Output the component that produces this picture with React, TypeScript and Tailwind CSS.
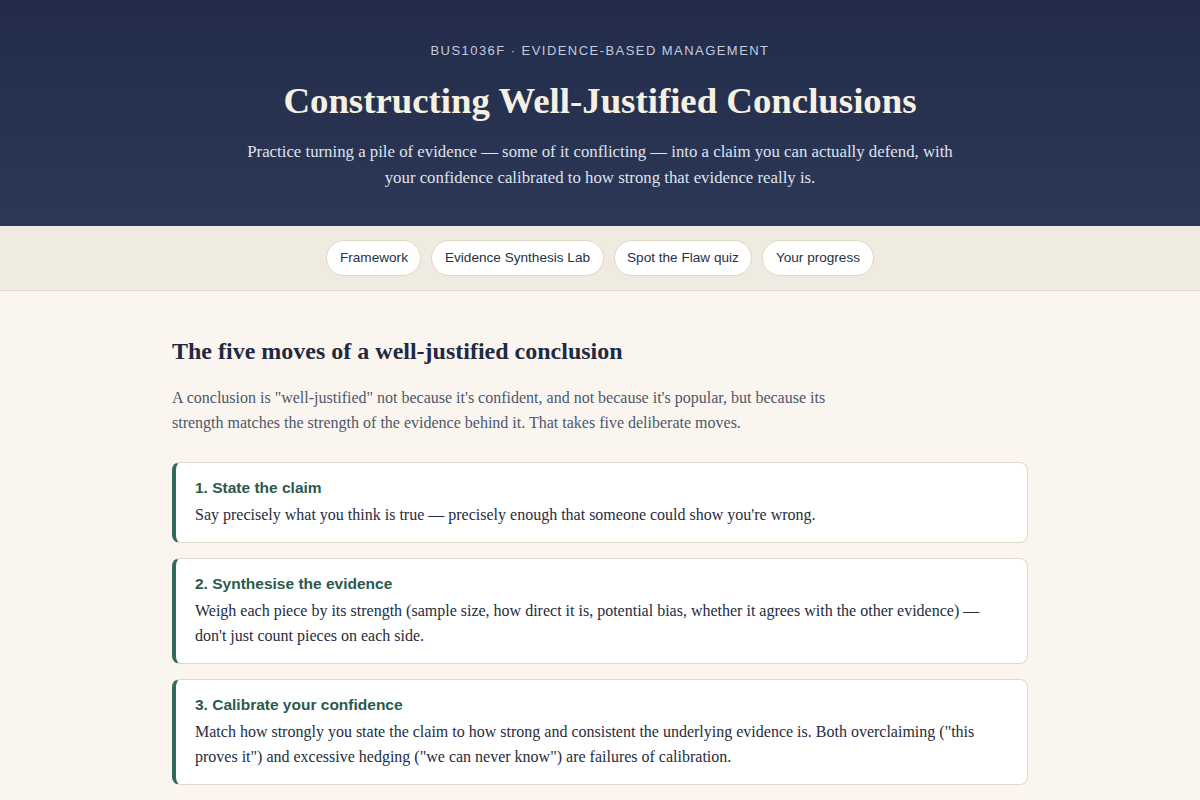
//Framework page for evidence-based conclusions
const steps = [
  {
    title: "1. State the claim",
    body: "Say precisely what you think is true — precisely enough that someone could show you're wrong.",
  },
  {
    title: "2. Synthesise the evidence",
    body: "Weigh each piece by its strength (sample size, how direct it is, potential bias, whether it agrees with the other evidence) — don't just count pieces on each side.",
  },
  {
    title: "3. Calibrate your confidence",
    body: 'Match how strongly you state the claim to how strong and consistent the underlying evidence is. Both overclaiming ("this proves it") and excessive hedging ("we can never know") are failures of calibration.',
  },
  {
    title: "4. Acknowledge the limits",
    body: "Name the evidence that cuts against you and explain why it doesn't overturn the conclusion.",
  },
];

const tabs = ["Framework", "Evidence Synthesis Lab", "Spot the Flaw quiz", "Your progress"];

function App() {
  return (
    <div className="min-h-screen bg-[#faf6ef] font-['Liberation_Serif',serif]">
      {/* Header */}
      <header className="bg-gradient-to-b from-[#222c4a] to-[#2c3857] px-6 pt-[41px] pb-[35px] text-center">
        <p className="font-['Liberation_Sans',sans-serif] text-[13px] leading-[20px] tracking-[1.45px] text-[#c3cbdd]">
          BUS1036F · EVIDENCE-BASED MANAGEMENT
        </p>
        <h1 className="mt-[18px] text-[36.8px] font-bold leading-[44px] text-[#f6f0e3]">
          Constructing Well-Justified Conclusions
        </h1>
        <p className="mx-auto mt-[16px] max-w-[720px] text-[16.8px] leading-[26px] text-[#dfe3ec]">
          Practice turning a pile of evidence — some of it conflicting — into a claim you can actually
          defend, with your confidence calibrated to how strong that evidence really is.
        </p>
      </header>

      {/* Tabs */}
      <nav className="flex justify-center gap-[10px] border-b border-[#e3dccd] bg-[#f0ebe0] py-[14px] font-['Liberation_Sans',sans-serif]">
        {tabs.map((tab) => (
          <button
            key={tab}
            className="h-[36px] rounded-full border border-[#e0d7c5] bg-white px-[12.5px] text-[13.6px] text-[#27304a]"
          >
            {tab}
          </button>
        ))}
      </nav>

      {/* Content */}
      <main className="mx-auto max-w-[856px] pt-[45px] pb-10">
        <h2 className="text-[24px] font-bold leading-[30px] text-[#1f2944]">
          The five moves of a well-justified conclusion
        </h2>
        <p className="mt-[19px] max-w-[670px] text-[16px] leading-[25px] text-[#4d566b]">
          A conclusion is "well-justified" not because it's confident, and not because it's popular, but
          because its strength matches the strength of the evidence behind it. That takes five deliberate
          moves.
        </p>

        <div className="mt-[27px] flex flex-col gap-[15px]">
          {steps.map((step) => (
            <div
              key={step.title}
              className="rounded-lg border border-l-4 border-[#e0d8c8] border-l-[#2f6b5d] bg-white pt-[15px] pb-[14px] pl-[19px] pr-5"
            >
              <h3 className="font-['Liberation_Sans',sans-serif] text-[15.5px] font-bold leading-[20px] text-[#2a5a4e]">
                {step.title}
              </h3>
              <p className="mt-1 text-[16px] leading-[25.6px] text-[#262c40]">{step.body}</p>
            </div>
          ))}
        </div>
      </main>
    </div>
  );
}

export default App;
